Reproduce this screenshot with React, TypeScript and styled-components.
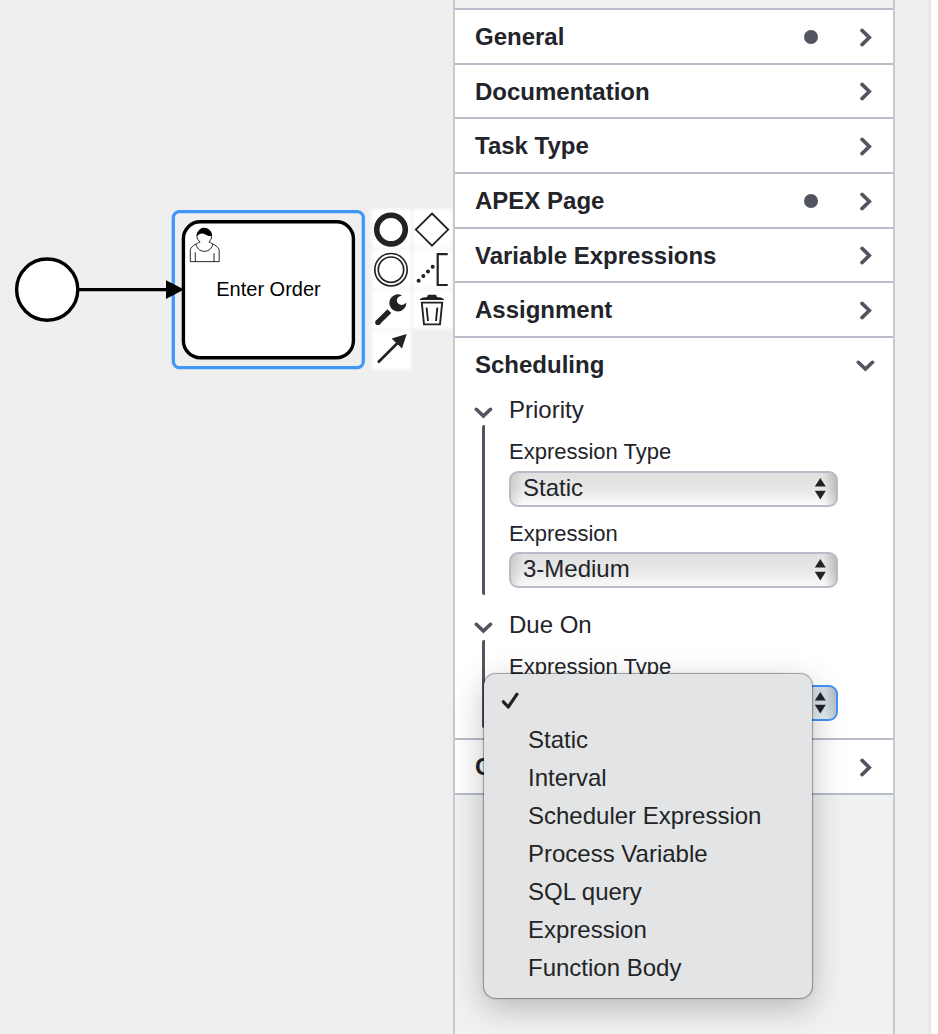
import React from "react";
import styled, { createGlobalStyle } from "styled-components";

const GlobalStyle = createGlobalStyle`
  * { box-sizing: border-box; }
  body { margin: 0; background: #efefef; font-family: "Liberation Sans", Arial, Helvetica, sans-serif; color: #22242a; overflow: hidden; }
`;

const Page = styled.div`
  display: flex;
  width: 938px;
  height: 1034px;
  overflow: hidden;
  background: #efefef;
`;

const Canvas = styled.main`
  width: 453px;
  flex: none;
`;

const Diagram = styled.svg`
  display: block;
`;

const Panel = styled.aside`
  width: 442px;
  flex: none;
  border: solid #cacaca;
  border-width: 0 2px;
  background: #eff1f3;
  padding-top: 8px;
`;

const Gutter = styled.div`
  width: 36px;
  flex: none;
  border-right: 2px solid #e5e5e5;
`;

const Edge = styled.div`
  flex: 1;
  background: #fdfdfd;
`;

const Group = styled.section<{ $height: number; $last?: boolean }>`
  height: ${(p) => p.$height}px;
  border-top: 2px solid #b8bbc8;
  border-bottom: ${(p) => (p.$last ? "2px solid #b8bbc8" : "0")};
  background: #fff;
`;

const GroupHeader = styled.header<{ $height: number }>`
  display: flex;
  align-items: center;
  height: ${(p) => p.$height}px;
  padding: 0 18px 0 20px;
`;

const GroupTitle = styled.h2`
  flex: 1;
  margin: 0;
  font-size: 24px;
  line-height: 27px;
  font-weight: 700;
`;

const Dot = styled.span`
  width: 14px;
  height: 14px;
  margin: 1px 37px 0 0;
  border-radius: 50%;
  background: #52555f;
`;

const Chevron = styled.svg<{ $drop?: number }>`
  display: block;
  flex: none;
  margin-top: ${(p) => p.$drop ?? 2}px;
`;

const Collapsible = styled.div<{ $height: number }>`
  height: ${(p) => p.$height}px;
  padding-left: 18px;
`;

const CollapsibleHeader = styled.div`
  display: flex;
  align-items: center;
  gap: 16px;
  height: 37px;
  font-size: 24px;
  line-height: 27px;
`;

const Entries = styled.div<{ $height: number }>`
  height: ${(p) => p.$height}px;
  margin: -3px 0 0 9px;
  padding: 14px 0 0 24px;
  border-left: 3px solid #52555f;
  border-radius: 2px;
`;

const Entry = styled.div`
  height: 81.5px;
`;

const Label = styled.label<{ $tight?: boolean }>`
  display: block;
  height: ${(p) => (p.$tight ? 31 : 31.5)}px;
  font-size: 22px;
  line-height: 25px;
`;

const Select = styled.div<{ $focus?: boolean }>`
  display: flex;
  align-items: center;
  justify-content: space-between;
  width: 329px;
  height: 36px;
  padding: 0 10px 3px 12px;
  font-size: 24px;
  line-height: 27px;
  border: 2px solid ${(p) => (p.$focus ? "#3f94f7" : "#b8bbc8")};
  border-radius: 9px;
  background:
    linear-gradient(90deg, rgba(0, 0, 0, 0.1), transparent 12px, transparent calc(100% - 12px), rgba(0, 0, 0, 0.17)),
    ${(p) =>
      p.$focus
        ? "linear-gradient(#d5dee6, #d9e3eb 50%, #e8f1f8)"
        : "linear-gradient(#e0e0e0, #e7e7e7 50%, #fafafa)"};
`;

const Arrows = styled.svg`
  display: block;
  margin-top: 3px;
`;

const Menu = styled.ul`
  position: absolute;
  left: 484px;
  top: 674px;
  width: 328px;
  height: 324px;
  margin: 0;
  padding: 8px 0 0;
  list-style: none;
  border-radius: 12px;
  background: #e3e4e6;
  box-shadow: 0 0 1px 0.5px rgba(0, 0, 0, 0.35), 0 9px 32px rgba(0, 0, 0, 0.25);
`;

const Option = styled.li`
  display: flex;
  align-items: center;
  height: 38px;
  padding-left: 15px;
  font-size: 24px;
  line-height: 27px;
  color: #222426;
`;

const CheckSlot = styled.span`
  width: 29px;
  flex: none;
`;

const CheckMark = styled.svg`
  display: block;
`;

const ChevronRight = () => (
  <Chevron width="20" height="20" viewBox="0 0 20 20">
    <path d="M7 2.4 14.3 9.5 7 16.6" fill="none" stroke="#52555f" strokeWidth="3.6" strokeLinecap="round" />
  </Chevron>
);

const ChevronDown = ({ drop }: { drop?: number }) => (
  <Chevron $drop={drop} width="20" height="20" viewBox="0 0 20 20">
    <path d="M3.3 6.3 10.4 13.1 17.5 6.3" fill="none" stroke="#52555f" strokeWidth="3.6" strokeLinecap="round" />
  </Chevron>
);

const SelectField = ({ label, value, focus }: { label: string; value: string; focus?: boolean }) => (
  <Entry>
    <Label $tight={focus}>{label}</Label>
    <Select $focus={focus}>
      <span>{value}</span>
      <Arrows width="12" height="22" viewBox="0 0 12 22">
        <path d="M.8 8.4 6.3 0l5.5 8.4zM.8 12.8h11L6.3 21.4z" fill="#222328" />
      </Arrows>
    </Select>
  </Entry>
);

const groups = [
  { title: "General", height: 55, dot: true },
  { title: "Documentation", height: 54 },
  { title: "Task Type", height: 55 },
  { title: "APEX Page", height: 55, dot: true },
  { title: "Variable Expressions", height: 54 },
  { title: "Assignment", height: 55 },
];

const options = ["", "Static", "Interval", "Scheduler Expression", "Process Variable", "SQL query", "Expression", "Function Body"];

const padEntries = [
  [371.5, 209], [413, 209],
  [371.5, 249.5], [413, 249.5],
  [371.5, 290], [413, 290],
  [371.5, 330.5],
];

const ProcessDiagram = () => (
  <Diagram width="453" height="1034" viewBox="0 0 453 1034">
    <defs>
      <filter id="soft" x="-10%" y="-10%" width="120%" height="120%">
        <feGaussianBlur stdDeviation="1.5" />
      </filter>
    </defs>
    <circle cx="47.2" cy="289.6" r="30.6" fill="#fff" stroke="#000" strokeWidth="3.4" />
    <g transform="translate(183.4 221.7) scale(1.7)">
      <rect width="100" height="80" rx="10" fill="#fff" stroke="#000" strokeWidth="2" />
      <g fill="#fff" stroke="#000" strokeWidth=".5">
        <path d="m15 12c.909-.845 1.594-2.049 1.594-3.385 0-2.554-1.805-4.622-4.357-4.622-2.552 0-4.288 2.068-4.288 4.622 0 1.348.974 2.562 1.896 3.405-.529.187-5.669 2.097-5.794 4.756v6.718h17v-6.718c0-2.298-5.528-4.595-6.051-4.776zm-8 6v5.5m11 0v-5" />
        <path d="m15 12m2.162 1.009c0 2.447-2.158 4.431-4.821 4.431-2.663 0-4.822-1.981-4.822-4.431" />
        <path d="m15 12m-6.9-3.8c0 0 2.251-2.358 4.274-1.177 2.024 1.181 4.221 1.537 4.124.965-.098-.57-.117-3.791-4.191-4.136-3.572-.308-4.207 4.348-4.207 4.348z" fill="#000" />
      </g>
    </g>
    <rect x="173.3" y="211.6" width="190" height="156" rx="6" fill="none" stroke="#4096f9" strokeWidth="3.3" />
    <path d="M79 289.6h90" stroke="#000" strokeWidth="3.4" />
    <path d="M166 280.2v18.8l18-9.4z" />
    <text x="268.5" y="296" fontSize="20" textAnchor="middle" fill="#000">Enter Order</text>

    <g fill="#fff" filter="url(#soft)">
      {padEntries.map(([x, y]) => (
        <rect key={`${x}-${y}`} x={x} y={y} width="39.5" height="39" rx="2" />
      ))}
    </g>
    <g fill="none" stroke="#222">
      <circle cx="391" cy="229.6" r="14.3" strokeWidth="5.6" />
      <path d="M432 213.5 448.2 229.6 432 245.7 415.8 229.6z" strokeWidth="1.8" />
      <circle cx="391" cy="269.7" r="16.2" strokeWidth="1.7" />
      <circle cx="391" cy="269.7" r="12.7" strokeWidth="1.7" />
      <path d="M447.7 254.1H437.7V285H447.7" strokeWidth="2.2" />
      <path d="M378 362.5 398 342.5" strokeWidth="2.7" />
      <path d="M377.9 322.4 389.4 311.1" strokeWidth="5.4" />
      <path d="M421.8 302.6 424 324.4H440L442.2 302.6z" strokeWidth="1.9" />
      <path d="M426.6 307.7 428 321M437.3 307.7 436 321" strokeWidth="1.9" />
    </g>
    <g fill="#222">
      <circle cx="418.6" cy="280.8" r="2" />
      <circle cx="423.3" cy="276.1" r="2" />
      <circle cx="428" cy="271.4" r="2" />
      <circle cx="432.7" cy="266.7" r="2" />
      <circle cx="377.9" cy="322.4" r="2.7" />
      <path d="M406.7 334 402 348.4 391.6 338.6z" />
      <path d="M402 295.5A8.5 8.5 0 1 0 406.3 302.6C403.4 306.6 397 305.2 396.8 300.6C396.7 297.8 399 296.2 402 295.5z" />
      <path d="M419.7 300C420 297.8 424 297.4 427 297L428 294.8H436L437 297C440 297.4 443.7 297.8 444 300z" />
    </g>
  </Diagram>
);

export default function App() {
  return (
    <>
      <GlobalStyle />
      <Page>
        <Canvas>
          <ProcessDiagram />
        </Canvas>
        <Panel>
          {groups.map((g) => (
            <Group key={g.title} $height={g.height}>
              <GroupHeader $height={g.height - 2}>
                <GroupTitle>{g.title}</GroupTitle>
                {g.dot && <Dot />}
                <ChevronRight />
              </GroupHeader>
            </Group>
          ))}
          <Group $height={402}>
            <GroupHeader $height={53}>
              <GroupTitle>Scheduling</GroupTitle>
              <ChevronDown drop={3} />
            </GroupHeader>
            <Collapsible $height={215}>
              <CollapsibleHeader>
                <ChevronDown drop={6} />
                <span>Priority</span>
              </CollapsibleHeader>
              <Entries $height={170}>
                <SelectField label="Expression Type" value="Static" />
                <SelectField label="Expression" value="3-Medium" />
              </Entries>
            </Collapsible>
            <Collapsible $height={132}>
              <CollapsibleHeader>
                <ChevronDown drop={6} />
                <span>Due On</span>
              </CollapsibleHeader>
              <Entries $height={88}>
                <SelectField label="Expression Type" value="" focus />
              </Entries>
            </Collapsible>
          </Group>
          <Group $height={57} $last>
            <GroupHeader $height={53}>
              <GroupTitle>C</GroupTitle>
              <ChevronRight />
            </GroupHeader>
          </Group>
        </Panel>
        <Gutter />
        <Edge />
      </Page>
      <Menu>
        {options.map((o) => (
          <Option key={o}>
            <CheckSlot>
              {o === "" && (
                <CheckMark width="22" height="22" viewBox="0 0 22 22">
                  <path d="M4.4 11.8 9.2 17 18 4.2" fill="none" stroke="#222" strokeWidth="3.2" strokeLinecap="round" strokeLinejoin="round" />
                </CheckMark>
              )}
            </CheckSlot>
            {o}
          </Option>
        ))}
      </Menu>
    </>
  );
}
